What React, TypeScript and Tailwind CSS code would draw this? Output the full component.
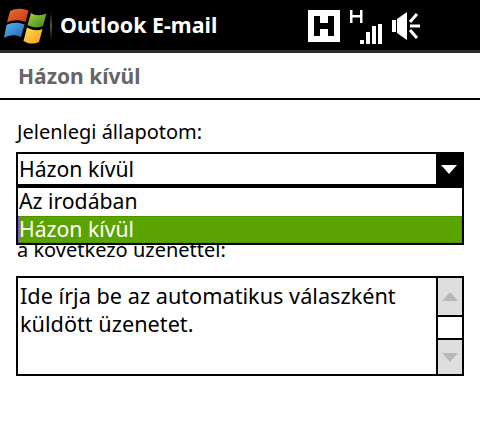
import React from "react";

const font = { fontFamily: '"Noto Sans", "DejaVu Sans", sans-serif' };

function WinLogo() {
  return (
    <svg width="46" height="46" viewBox="0 0 46 46" className="shrink-0">
      <defs>
        <linearGradient id="r" x1="0" y1="0" x2="1" y2="1"><stop offset="0" stopColor="#e8722c" /><stop offset="1" stopColor="#c9341a" /></linearGradient>
        <linearGradient id="g" x1="0" y1="0" x2="1" y2="1"><stop offset="0" stopColor="#a6cf3f" /><stop offset="1" stopColor="#3f8a1e" /></linearGradient>
        <linearGradient id="b" x1="0" y1="0" x2="1" y2="1"><stop offset="0" stopColor="#5cb8ee" /><stop offset="1" stopColor="#1a64b4" /></linearGradient>
        <linearGradient id="y" x1="0" y1="0" x2="1" y2="1"><stop offset="0" stopColor="#ffe24f" /><stop offset="1" stopColor="#f39a1c" /></linearGradient>
      </defs>
      <path d="M9 10 C15 7 21 7 27.5 9.5 L24.5 21 C18 18.5 12 18.5 6 21.5 Z" fill="url(#r)" />
      <path d="M30 12 C35 15 40 14.5 45.5 12.5 L42 25 C37 27 32 27 26.5 24 Z" fill="url(#g)" />
      <path d="M5.5 24 C11.5 21 17.5 21 23.5 23.5 L20 36 C14 33.5 9 33.5 3 37 Z" fill="url(#b)" />
      <path d="M26 26.5 C31.5 29.5 36.5 30 41.5 28 L38 41 C32.5 43.5 27.5 43 22.5 40 Z" fill="url(#y)" />
    </svg>
  );
}

function StatusIcons() {
  return (
    <div className="flex items-start ml-auto">
      <svg width="32" height="32" viewBox="0 0 32 32" className="mt-[10px]">
        <path fillRule="evenodd" d="M0 0H32V32H0Z M6 6V26H12V19H20V26H26V6H20V13H12V6Z" fill="#fff" />
      </svg>
      <svg width="32" height="34" viewBox="0 0 32 34" className="ml-[10px] mt-[10px]">
        <path d="M0 0H2.5V5H10V0H12.5V13H10V7.5H2.5V13H0Z" fill="#fff" />
        <rect x="10" y="30" width="4" height="4" fill="#fff" />
        <rect x="16" y="22" width="4" height="12" fill="#fff" />
        <rect x="22" y="16" width="4" height="18" fill="#fff" />
        <rect x="28" y="14" width="4" height="20" fill="#fff" />
      </svg>
      <svg width="28" height="28" viewBox="0 0 28 28" className="ml-[10px] mt-[12px]">
        <path d="M0 8H4V20H0Z M5 7L15 0V28L5 21Z" fill="#fff" />
        <path d="M18 10L25 2M18 14H28M18 18L25 26" stroke="#fff" strokeWidth="3" fill="none" />
      </svg>
    </div>
  );
}

export default function App() {
  return (
    <div className="w-[480px] h-[443px] bg-white text-black overflow-hidden" style={font}>
      <header className="h-[53px] bg-black border-b-[3px] border-[#2b2b2b] flex items-start pr-[60px]">
        <div className="ml-[1px] mt-[1px]"><WinLogo /></div>
        <div className="w-[2px] h-[38px] mt-[7px] ml-[3px] bg-gradient-to-b from-black via-[#555] to-black" />
        <span className="ml-[8px] mt-[7px] text-white font-bold text-[21.4px] leading-[36px]">Outlook E-mail</span>
        <StatusIcons />
      </header>
      <div className="h-[47px] border-b-2 border-black pl-[18px] flex items-center">
        <span className="font-bold text-[#666] text-[21px] leading-[28px]">Házon kívül</span>
      </div>
      <main className="px-4 pt-[20px]">
        <p className="text-[20px] leading-[24px] pl-[1px] h-[32px]">Jelenlegi állapotom:</p>
        <div className="relative">
          <div className="h-[34px] border-2 border-black flex items-center">
            <span className="pl-[1px] text-[21.2px] leading-[28px] flex-1">Házon kívül</span>
            <div className="w-[26px] h-full bg-black flex items-center justify-center">
              <svg width="16" height="9" viewBox="0 0 16 9"><path d="M0 0H16L8 9Z" fill="#fff" /></svg>
            </div>
          </div>
          <div className="absolute left-0 right-0 top-[34px] h-[59px] border-2 border-black bg-white z-10">
            <div className="h-[28px] pl-[1px] text-[21.2px] leading-[26px]">Az irodában</div>
            <div className="h-[27px] pl-[1px] text-[21.2px] leading-[25px] bg-[#5ba300] text-white outline-1 -outline-offset-1 outline-dotted outline-[#7a3fc0]">Házon kívül</div>
          </div>
          <p className="pt-[52px] pl-[1px] text-[20px] leading-[24px] h-[90px]">a következő üzenettel:</p>
        </div>
        <div className="h-[100px] border-2 border-black flex">
          <div className="flex-1 px-[2px] pt-[4px] text-[21.7px] leading-[28px]">
            Ide írja be az automatikus válaszként küldött üzenetet.
          </div>
          <div className="w-[26px] border-l-2 border-black flex flex-col">
            <div className="h-[37px] bg-[#dedede] flex items-center justify-center">
              <svg width="16" height="9" viewBox="0 0 16 9"><path d="M0 9H16L8 0Z" fill="#b8b8b8" /></svg>
            </div>
            <div className="h-[25px] bg-white border-y-2 border-black" />
            <div className="flex-1 bg-[#dedede] flex items-center justify-center">
              <svg width="16" height="9" viewBox="0 0 16 9"><path d="M0 0H16L8 9Z" fill="#b8b8b8" /></svg>
            </div>
          </div>
        </div>
      </main>
    </div>
  );
}
